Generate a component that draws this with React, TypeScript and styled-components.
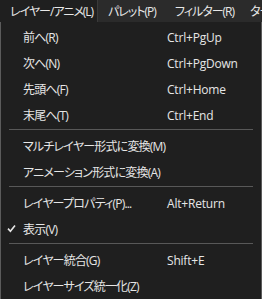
import React from 'react'
import styled, { createGlobalStyle } from 'styled-components'

const GlobalStyle = createGlobalStyle`
  html, body {
    margin: 0;
    padding: 0;
    background: #1f1f1f;
  }
  body {
    font-family: "Open Sans", "Noto Sans CJK JP", sans-serif;
    font-size: 12px;
    color: #e6e6e6;
  }
`

const Frame = styled.div`
  width: 262px;
  height: 299px;
  overflow: hidden;
  display: flex;
  flex-direction: column;
`

const MenuBar = styled.div`
  height: 22px;
  background: #2b2b2b;
  display: flex;
  align-items: stretch;
  white-space: nowrap;
  flex-shrink: 0;
  overflow: hidden;
`

const BarItem = styled.div<{ active?: boolean; w: number }>`
  width: ${({ w }) => w}px;
  flex-shrink: 0;
  box-sizing: border-box;
  display: flex;
  align-items: center;
  padding-left: 10px;
  background: ${({ active }) => (active ? '#1f1f1f' : 'transparent')};
  border-right: 1px solid ${({ active }) => (active ? '#3a3a3a' : 'transparent')};
  color: #e8e8e8;
  font-feature-settings: "palt";
  letter-spacing: -1px;
`

const Dropdown = styled.div`
  flex: 1;
  background: #1f1f1f;
  border: 1px solid #5b5b5b;
  border-top: none;
  padding-top: 2px;
  display: flex;
  flex-direction: column;
`

const Item = styled.div`
  position: relative;
  height: 26px;
  display: flex;
  align-items: center;
  padding-left: 22px;
  white-space: nowrap;
`

const Label = styled.span`
  width: 144px;
  flex-shrink: 0;
  font-feature-settings: "palt";
  letter-spacing: -0.8px;
`

const Shortcut = styled.span`
  color: #e6e6e6;
  letter-spacing: -0.2px;
`

const Check = styled.svg`
  position: absolute;
  left: 6px;
  top: 8px;
`

const Separator = styled.div`
  height: 5px;
  display: flex;
  align-items: flex-start;
  padding: 1px 8px 0 8px;
  box-sizing: border-box;
  &::after {
    content: '';
    flex: 1;
    height: 1px;
    background: #585858;
  }
`

type Entry = { label: string; shortcut?: string; checked?: boolean } | 'sep'

const entries: Entry[] = [
  { label: '前へ(R)', shortcut: 'Ctrl+PgUp' },
  { label: '次へ(N)', shortcut: 'Ctrl+PgDown' },
  { label: '先頭へ(F)', shortcut: 'Ctrl+Home' },
  { label: '末尾へ(T)', shortcut: 'Ctrl+End' },
  'sep',
  { label: 'マルチレイヤー形式に変換(M)' },
  { label: 'アニメーション形式に変換(A)' },
  'sep',
  { label: 'レイヤープロパティ(P)...', shortcut: 'Alt+Return' },
  { label: '表示(V)', checked: true },
  'sep',
  { label: 'レイヤー統合(G)', shortcut: 'Shift+E' },
  { label: 'レイヤーサイズ統一化(Z)' },
]

export default function App() {
  return (
    <Frame>
      <GlobalStyle />
      <MenuBar>
        <BarItem active w={98}>レイヤー/アニメ(L)</BarItem>
        <BarItem w={67}>パレット(P)</BarItem>
        <BarItem w={75}>フィルター(R)</BarItem>
        <BarItem w={60}>ター</BarItem>
      </MenuBar>
      <Dropdown>
        {entries.map((e, i) =>
          e === 'sep' ? (
            <Separator key={i} />
          ) : (
            <Item key={i}>
              {e.checked && (
                <Check width="9" height="9" viewBox="0 0 9 9">
                  <path d="M1 4.6 L3.4 7.2 L8 1.4" fill="none" stroke="#e6e6e6" strokeWidth="1.6" />
                </Check>
              )}
              <Label>{e.label}</Label>
              {e.shortcut && <Shortcut>{e.shortcut}</Shortcut>}
            </Item>
          )
        )}
      </Dropdown>
    </Frame>
  )
}
